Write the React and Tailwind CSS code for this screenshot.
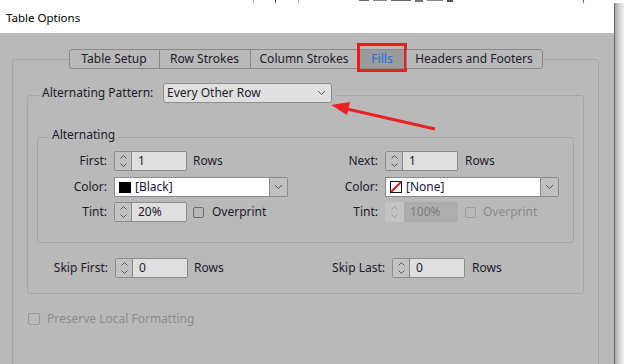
import React from "react";

function UpDown({ color = "#5a5a5a" }) {
  return (
    <svg width="9" height="16" viewBox="0 0 9 16" fill="none">
      <path d="M1.5 5.5 L4.5 2.5 L7.5 5.5" stroke={color} strokeWidth="1" />
      <path d="M1.5 10.5 L4.5 13.5 L7.5 10.5" stroke={color} strokeWidth="1" />
    </svg>
  );
}

function Chevron() {
  return (
    <svg width="9" height="6" viewBox="0 0 9 6" fill="none">
      <path d="M1 1 L4.5 4.5 L8 1" stroke="#5a5a5a" strokeWidth="1" />
    </svg>
  );
}

function Spinner({ value, disabled }) {
  if (disabled) {
    return (
      <div className="flex h-[20px] w-[73px] rounded-[2px] overflow-hidden">
        <div className="w-[19px] bg-[#c3c3c3] flex items-center justify-center">
          <UpDown color="#9a9a9a" />
        </div>
        <div className="flex-1 bg-[#adadad] pl-[6px] flex items-center text-[#7b7b7b]">{value}</div>
      </div>
    );
  }
  return (
    <div className="flex h-[20px] w-[73px] border border-[#8b8b8b] rounded-[2px] overflow-hidden">
      <div className="w-[17px] bg-[#c2c2c2] border-r border-[#8b8b8b] flex items-center justify-center">
        <UpDown />
      </div>
      <div className="flex-1 bg-[#dfdfdf] pl-[6px] flex items-center">{value}</div>
    </div>
  );
}

function Combo({ swatch, text }) {
  return (
    <div className="flex h-[20px] w-[174px]">
      <div className="w-[156px] bg-white border border-[#8b8b8b] flex items-center pl-[4px]">
        {swatch === "black" ? (
          <div className="w-[12px] h-[11px] bg-black" />
        ) : (
          <svg width="12" height="12" viewBox="0 0 12 12">
            <rect x="0.5" y="0.5" width="11" height="11" fill="white" stroke="#111" />
            <path d="M1 11 L11 1" stroke="#e3161c" strokeWidth="2" />
          </svg>
        )}
        <span className="ml-[4px] text-[#241540]">{text}</span>
      </div>
      <div className="flex-1 border border-l-0 border-[#8b8b8b] rounded-r-[2px] bg-[#c0c0c0] flex items-center justify-center">
        <Chevron />
      </div>
    </div>
  );
}

function Check({ disabled }) {
  return (
    <div
      className={
        "w-[11px] h-[11px] rounded-[2px] border " +
        (disabled ? "border-[#9c9c9c]" : "border-[#6c6c6c]")
      }
    />
  );
}

function Row({ label, children, labelClass = "" }) {
  return (
    <div className="flex items-center h-[20px]">
      <div className={"w-[69px] text-right " + labelClass}>{label}</div>
      <div className="ml-[7px] flex items-center">{children}</div>
    </div>
  );
}

const tabs = [
  { t: "Table Setup", w: "w-[89px]" },
  { t: "Row Strokes", w: "w-[91px]" },
  { t: "Column Strokes", w: "w-[108px]" },
  { t: "Fills", w: "w-[48px]", sel: true },
  { t: "Headers and Footers", w: "w-[136px]" },
];

export default function App() {
  return (
    <div className="relative w-[624px] h-[364px] overflow-hidden bg-white font-['Noto_Sans',sans-serif] text-[12px] text-[#1d1a2b]">
      <div className="h-[3px] flex bg-white">
        <div className="w-[253px]" />
        <div className="w-[1px] bg-[#9aa6d8]" />
        <div className="w-[21px]" />
        <div className="w-[1px] bg-[#555]" />
        <div className="w-[22px]" />
        <div className="w-[1px] bg-[#9aa6d8]" />
        <div className="w-[60px]" />
        <div className="w-[160px] flex gap-[4px] items-start">
          <div className="w-[10px] h-[1px] bg-[#666]" />
          <div className="w-[14px] h-[1px] bg-[#888]" />
          <div className="w-[20px] h-[1px] bg-[#666]" />
          <div className="w-[8px] h-[2px] bg-[#777]" />
          <div className="w-[16px] h-[1px] bg-[#888]" />
          <div className="w-[6px] h-[2px] bg-[#555]" />
        </div>
        <div className="w-[64px]" />
        <div className="w-[1px] bg-[#8a4fd0]" />
      </div>
      <div className="flex h-[361px]">
        <div className="w-[615px] flex flex-col border-r border-[#6a6a6a]">
          <div className="h-[30px] shrink-0 bg-white flex items-center pl-[6px] text-[11.5px] text-black">
            Table Options
          </div>
          <div className="flex-1 min-h-0 overflow-hidden bg-[#b9b9b9] pt-[16px] pl-[12px]">
            <fieldset className="w-[587px] h-[400px] border border-[#a6a6a6] rounded-[3px]">
              <legend className="mx-auto">
                <div className="flex h-[20px] border border-[#8a8a8a] rounded-[3px]">
                  {tabs.map((tb, i) => (
                    <div
                      key={tb.t}
                      className={
                        "relative flex items-center justify-center " +
                        tb.w +
                        (i > 0 ? " border-l border-[#8a8a8a]" : "") +
                        (tb.sel ? " bg-[#9b9b9b] text-[#1d6ee0]" : "")
                      }
                    >
                      {tb.t}
                      {tb.sel && (
                        <div className="absolute -top-[7px] -bottom-[4px] -left-[2px] -right-[1px] border-[3px] border-[#ef1b1f]" />
                      )}
                    </div>
                  ))}
                </div>
              </legend>
              <div className="pt-[14px] px-[14px]">
                <fieldset className="w-[557px] border border-[#a6a6a6] rounded-[3px]">
                  <legend className="ml-[11px] px-[3px] pb-[4px]">
                    <div className="flex items-center h-[20px]">
                      <div className="w-[121px]">Alternating Pattern:</div>
                      <div className="w-[169px] h-[20px] bg-[#e0e0e0] border border-[#8e8e8e] rounded-[3px] flex items-center justify-between pl-[3px] pr-[5px]">
                        <span>Every Other Row</span>
                        <Chevron />
                      </div>
                    </div>
                  </legend>
                  <div className="pt-[20px] px-[9px] pb-[15px]">
                    <fieldset className="w-[537px] border border-[#a6a6a6] rounded-[3px]">
                      <legend className="ml-[11px] px-[3px] pb-[4px] leading-[16px]">Alternating</legend>
                      <div className="flex pt-[4px] pb-[20px]">
                        <div className="w-[271px] flex flex-col">
                          <Row label="First:">
                            <Spinner value="1" />
                            <span className="ml-[6px]">Rows</span>
                          </Row>
                          <div className="mt-[6px]">
                            <Row label="Color:">
                              <Combo swatch="black" text="[Black]" />
                            </Row>
                          </div>
                          <div className="mt-[5px]">
                            <Row label="Tint:">
                              <Spinner value="20%" />
                              <div className="ml-[6px]">
                                <Check />
                              </div>
                              <span className="ml-[8px]">Overprint</span>
                            </Row>
                          </div>
                        </div>
                        <div className="flex flex-col">
                          <Row label="Next:">
                            <Spinner value="1" />
                            <span className="ml-[7px]">Rows</span>
                          </Row>
                          <div className="mt-[6px]">
                            <Row label="Color:">
                              <Combo swatch="none" text="[None]" />
                            </Row>
                          </div>
                          <div className="mt-[5px]">
                            <Row label="Tint:">
                              <Spinner value="100%" disabled />
                              <div className="ml-[7px]">
                                <Check disabled />
                              </div>
                              <span className="ml-[7px] text-[#8a8a8a]">Overprint</span>
                            </Row>
                          </div>
                        </div>
                      </div>
                    </fieldset>
                    <div className="flex items-center h-[20px] mt-[15px]">
                      <div className="w-[271px] flex items-center">
                        <div className="w-[71px] text-right">Skip First:</div>
                        <div className="ml-[7px]">
                          <Spinner value="0" />
                        </div>
                        <span className="ml-[6px]">Rows</span>
                      </div>
                      <div className="flex items-center">
                        <div className="w-[77px] text-right">Skip Last:</div>
                        <div className="ml-[7px]">
                          <Spinner value="0" />
                        </div>
                        <span className="ml-[7px]">Rows</span>
                      </div>
                    </div>
                  </div>
                </fieldset>
                <div className="flex items-center h-[12px] mt-[19px] ml-[1px]">
                  <div className="w-[12px] h-[12px] rounded-[2px] border border-[#9a9a9a]" />
                  <span className="ml-[7px] text-[#8c8c8c]">Preserve Local Formatting</span>
                </div>
              </div>
            </fieldset>
          </div>
        </div>
        <div className="flex-1 bg-gradient-to-r from-[#a8a8a8] via-[#d4d4d4] to-[#f0f0f0]" />
      </div>
      <svg
        className="absolute top-0 left-0 pointer-events-none"
        width="624"
        height="364"
        viewBox="0 0 624 364"
      >
        <line x1="435" y1="129" x2="347" y2="109" stroke="#ea2226" strokeWidth="3" />
        <polygon points="331,105 350,102 347,115" fill="#ea2226" />
      </svg>
    </div>
  );
}
